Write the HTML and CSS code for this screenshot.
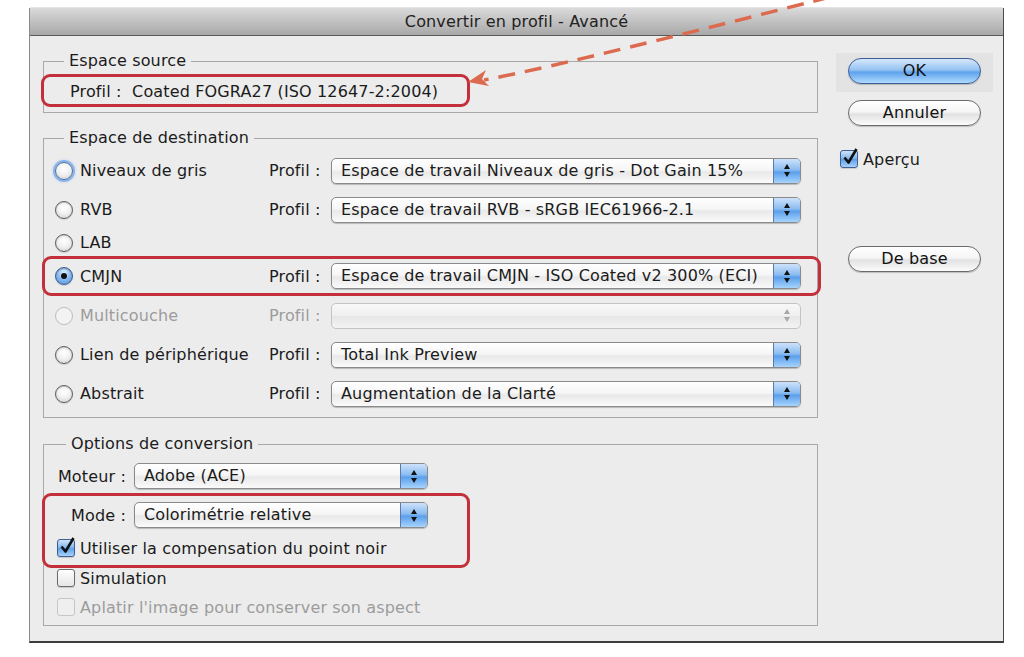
FILE: index.html
```html
<!DOCTYPE html>
<html lang="fr">
<head>
    <meta charset="UTF-8">
    <meta name="viewport" content="width=device-width, initial-scale=1.0">
    <title>Convertir en profil - Avancé</title>
    <link rel="stylesheet" href="styles.css">
</head>
<body>
<div class="page">
    <div class="window">
        <div class="titlebar">Convertir en profil - Avancé</div>
        <div class="dialog">
            <div class="main">
                <!-- espace source -->
                <div class="group group-source">
                    <div class="group-title">Espace source</div>
                    <div class="mark mark-source">Profil :&nbsp; Coated FOGRA27 (ISO 12647-2:2004)</div>
                </div>

                <!-- espace de destination -->
                <div class="group group-dest">
                    <div class="group-title">Espace de destination</div>
                    <div class="dest-row">
                        <div class="choice"><span class="radio focus"></span>Niveaux de gris</div>
                        <span class="field-label">Profil :</span>
                        <div class="popup wide"><span class="popup-text">Espace de travail Niveaux de gris - Dot Gain 15%</span><span class="popup-arrows"></span></div>
                    </div>
                    <div class="dest-row">
                        <div class="choice"><span class="radio"></span>RVB</div>
                        <span class="field-label">Profil :</span>
                        <div class="popup wide"><span class="popup-text">Espace de travail RVB - sRGB IEC61966-2.1</span><span class="popup-arrows"></span></div>
                    </div>
                    <div class="dest-row short">
                        <div class="choice"><span class="radio"></span>LAB</div>
                    </div>
                    <div class="mark mark-dest">
                        <div class="dest-row">
                            <div class="choice"><span class="radio on"></span>CMJN</div>
                            <span class="field-label">Profil :</span>
                            <div class="popup wide"><span class="popup-text">Espace de travail CMJN - ISO Coated v2 300% (ECI)</span><span class="popup-arrows"></span></div>
                        </div>
                    </div>
                    <div class="dest-row disabled">
                        <div class="choice"><span class="radio off"></span>Multicouche</div>
                        <span class="field-label">Profil :</span>
                        <div class="popup wide off"><span class="popup-text"></span><span class="popup-arrows"></span></div>
                    </div>
                    <div class="dest-row">
                        <div class="choice"><span class="radio"></span>Lien de périphérique</div>
                        <span class="field-label">Profil :</span>
                        <div class="popup wide"><span class="popup-text">Total Ink Preview</span><span class="popup-arrows"></span></div>
                    </div>
                    <div class="dest-row">
                        <div class="choice"><span class="radio"></span>Abstrait</div>
                        <span class="field-label">Profil :</span>
                        <div class="popup wide"><span class="popup-text">Augmentation de la Clarté</span><span class="popup-arrows"></span></div>
                    </div>
                </div>

                <!-- options de conversion -->
                <div class="group group-options">
                    <div class="group-title">Options de conversion</div>
                    <div class="opt-row">
                        <span class="opt-label">Moteur :</span>
                        <div class="popup narrow"><span class="popup-text">Adobe (ACE)</span><span class="popup-arrows"></span></div>
                    </div>
                    <div class="mark mark-options">
                        <div class="opt-row">
                            <span class="opt-label">Mode :</span>
                            <div class="popup narrow"><span class="popup-text">Colorimétrie relative</span><span class="popup-arrows"></span></div>
                        </div>
                        <div class="check-row">
                            <span class="check on"><svg width="18" height="18" viewBox="0 0 18 18"><path d="M3.5 9.5 L7.5 14.5 L15.5 1" fill="none" stroke="#111" stroke-width="2.6" stroke-linejoin="round"/></svg></span>
                            Utiliser la compensation du point noir
                        </div>
                    </div>
                    <div class="check-row plain">
                        <span class="check"></span>
                        Simulation
                    </div>
                    <div class="check-row plain disabled last">
                        <span class="check off"></span>
                        Aplatir l'image pour conserver son aspect
                    </div>
                </div>
            </div>

            <div class="side">
                <div class="default-wrap">
                    <div class="btn primary">OK</div>
                </div>
                <div class="btn cancel">Annuler</div>
                <div class="side-check">
                    <span class="check on"><svg width="18" height="18" viewBox="0 0 18 18"><path d="M3.5 9.5 L7.5 14.5 L15.5 1" fill="none" stroke="#111" stroke-width="2.6" stroke-linejoin="round"/></svg></span>
                    Aperçu
                </div>
                <div class="btn reset">De base</div>
            </div>
        </div>
    </div>

    <!-- flèche d'annotation -->
    <svg class="annotation" width="1024" height="657" viewBox="0 0 1024 657">
        <path d="M830 -3 Q560 66 484 80" fill="none" stroke="#dc6a4e" stroke-width="3.5" stroke-dasharray="17 10"/>
        <polygon points="468,82 486,70 482,79 489,86" fill="#dc6a4e"/>
    </svg>
</div>
</body>
</html>
```

FILE: styles.css
```css
body {
    margin: 0;
    background: #fff;
    font-family: "DejaVu Sans", "Liberation Sans", sans-serif;
    font-size: 16px;
    letter-spacing: 0.15px;
    color: #1b1b1b;
}
.page {
    position: relative;
    width: 1024px;
    height: 657px;
    overflow: hidden;
}
.window {
    margin: 8px 0 0 29px;
    width: 975px;
    height: 635px;
    box-sizing: border-box;
    background: #ececec;
    border-left: 1px solid #8a8a8a;
    border-right: 1px solid #4a4a4a;
    border-bottom: 2px solid #3c3c3c;
    display: flex;
    flex-direction: column;
}
.titlebar {
    height: 27px;
    line-height: 27px;
    text-align: center;
    color: #222;
    background: linear-gradient(#dadada, #bcbcbc 60%, #a8a8a8);
    border-top: 1px solid #e4e4e4;
    border-bottom: 1px solid #5a5a5a;
    margin-top: -1px;
}
.dialog {
    display: flex;
    flex: 1;
}
.main {
    width: 775px;
    padding: 25px 0 0 13px;
}
.group {
    border: 1px solid #a8a8a8;
}
.group-title {
    width: max-content;
    margin: -11px 0 0 20px;
    padding: 0 5px;
    line-height: 20px;
    background: #ececec;
}
.group-dest {
    margin-top: 25px;
    padding-bottom: 4px;
}
.group-dest .group-title {
    margin-bottom: 3px;
}
.group-options {
    margin-top: 26px;
    padding-bottom: 8px;
}
.group-options .group-title {
    margin: -11px 0 6px 22px;
}

/* cadres rouges */
.mark {
    box-sizing: border-box;
    border: 3px solid #c3303b;
    border-radius: 9px;
}
.mark-source {
    margin: 3px 0 5px -3px;
    width: 429px;
    height: 33px;
    padding: 4px 0 0 26px;
    line-height: 22px;
}
.mark-dest {
    margin: 0 -4px 0 -2px;
}
.mark-dest .dest-row {
    height: 34px;
    padding-left: 10px;
}
.mark-options {
    margin: 1px 0 0 -2px;
    width: 428px;
    padding-top: 3px;
}
.mark-options .opt-row,
.mark-options .check-row {
    padding-left: 12px;
}

/* lignes */
.dest-row {
    display: flex;
    align-items: center;
    height: 39px;
    padding-left: 11px;
}
.dest-row.short {
    height: 27px;
}
.choice {
    width: 214px;
    display: flex;
    align-items: center;
    gap: 7px;
}
.field-label {
    width: 52px;
    margin-right: 10px;
    white-space: nowrap;
}
.disabled {
    color: #9c9c9c;
}
.opt-row {
    display: flex;
    align-items: center;
    height: 32px;
    padding-left: 13px;
}
.opt-label {
    width: 69px;
    margin-right: 8px;
    text-align: right;
    white-space: nowrap;
}
.check-row {
    display: flex;
    align-items: center;
    gap: 5px;
    height: 34px;
    padding-left: 12px;
}
.check-row.plain {
    height: 20px;
    padding-left: 13px;
}
.check-row.last {
    margin-top: 9px;
}

/* menus */
.popup {
    display: flex;
    height: 26px;
    box-sizing: border-box;
    border: 1px solid #8a8a8a;
    border-radius: 5px;
    background: linear-gradient(#ffffff, #f6f6f6 45%, #e9e9e9 55%, #fafafa);
    box-shadow: 0 1px 1px rgba(0,0,0,0.22);
    overflow: hidden;
}
.popup.wide {
    width: 470px;
}
.popup.narrow {
    width: 294px;
}
.popup-text {
    flex: 1;
    padding-left: 9px;
    line-height: 24px;
    white-space: nowrap;
}
.popup-arrows {
    width: 26px;
    display: flex;
    flex-direction: column;
    align-items: center;
    justify-content: center;
    gap: 3px;
    border-left: 1px solid #5f78ad;
    background: linear-gradient(#cde2fb, #8bbcf0 45%, #5b9feb 55%, #a6d4fd);
}
.popup-arrows::before,
.popup-arrows::after {
    content: "";
    border-left: 3.5px solid transparent;
    border-right: 3.5px solid transparent;
}
.popup-arrows::before {
    border-bottom: 5px solid #111;
}
.popup-arrows::after {
    border-top: 5px solid #111;
}
.popup.off {
    border-color: #c4c4c4;
    box-shadow: none;
    background: linear-gradient(#f8f8f8, #efefef 50%, #e6e6e6 50%, #f3f3f3);
}
.popup.off .popup-arrows {
    background: none;
    border-left: none;
}
.popup.off .popup-arrows::before {
    border-bottom-color: #a8a8a8;
}
.popup.off .popup-arrows::after {
    border-top-color: #a8a8a8;
}

/* boutons radio et cases */
.radio {
    width: 18px;
    height: 18px;
    flex: none;
    box-sizing: border-box;
    border-radius: 50%;
    border: 1px solid #5f5f5f;
    background: radial-gradient(circle at 50% 35%, #ffffff 0%, #f2f2f2 45%, #cdcdcd 100%);
    box-shadow: inset 0 1px 1px rgba(0,0,0,0.2), 0 1px 1px rgba(0,0,0,0.15);
}
.radio.focus {
    border-color: #4d6f9f;
    box-shadow: 0 0 0 2px #8db4e8, 0 0 3px 2px #b3cff2;
}
.radio.on {
    display: flex;
    align-items: center;
    justify-content: center;
    border-color: #3a5a8c;
    background: radial-gradient(circle at 50% 30%, #e3effc 0%, #86b8ee 50%, #4c8fdc 100%);
}
.radio.on::after {
    content: "";
    width: 6px;
    height: 6px;
    border-radius: 50%;
    background: #111;
}
.radio.off {
    border-color: #bdbdbd;
    background: #f3f3f3;
    box-shadow: none;
}
.check {
    position: relative;
    width: 18px;
    height: 18px;
    flex: none;
    box-sizing: border-box;
    border-radius: 3px;
    border: 1px solid #6a6a6a;
    background: linear-gradient(#ffffff, #e6e6e6);
    box-shadow: 0 1px 1px rgba(0,0,0,0.15);
}
.check.on {
    border-color: #3e5f93;
    background: linear-gradient(#d1e4fa, #81b5ed 48%, #5e9ee6 52%, #a8d2fb);
}
.check.on svg {
    position: absolute;
    left: 0;
    top: -3px;
    overflow: visible;
}
.check.off {
    border-color: #c6c6c6;
    background: #efefef;
    box-shadow: none;
}

/* colonne des boutons */
.side {
    width: 157px;
    margin-left: 18px;
    padding-top: 17px;
}
.default-wrap {
    background: #e3e3e3;
    padding: 5px 12px 8px;
}
.btn {
    width: 133px;
    height: 26px;
    box-sizing: border-box;
    border: 1px solid #6b6b6b;
    border-radius: 13px;
    line-height: 24px;
    text-align: center;
    color: #111;
    background: linear-gradient(#ffffff, #f5f5f5 45%, #e2e2e2 55%, #fbfbfb);
    box-shadow: 0 1px 1px rgba(0,0,0,0.2);
}
.btn.primary {
    border-color: #3d5d97;
    background: linear-gradient(#d6e8fc, #96c3f2 45%, #5fa2ec 55%, #aedbff);
}
.btn.cancel {
    margin: 8px 0 0 12px;
}
.btn.reset {
    margin: 77px 0 0 12px;
}
.side-check {
    display: flex;
    align-items: center;
    gap: 5px;
    height: 20px;
    margin: 23px 0 0 4px;
}

.annotation {
    position: absolute;
    left: 0;
    top: 0;
    pointer-events: none;
}
```
